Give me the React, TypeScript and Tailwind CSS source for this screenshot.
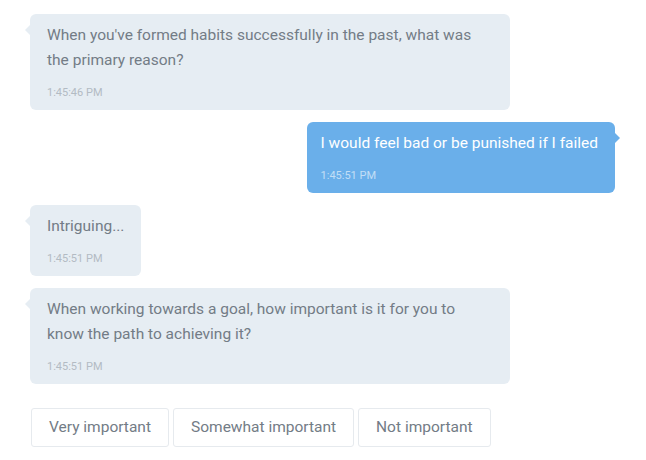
import React from 'react';

type Msg = { from: 'bot' | 'me'; text: string; time: string };

const messages: Msg[] = [
  { from: 'bot', text: "When you've formed habits successfully in the past, what was the primary reason?", time: '1:45:46 PM' },
  { from: 'me', text: 'I would feel bad or be punished if I failed', time: '1:45:51 PM' },
  { from: 'bot', text: 'Intriguing...', time: '1:45:51 PM' },
  { from: 'bot', text: 'When working towards a goal, how important is it for you to know the path to achieving it?', time: '1:45:51 PM' },
];

const options = ['Very important', 'Somewhat important', 'Not important'];

function Bubble({ msg }: { msg: Msg }) {
  const mine = msg.from === 'me';
  return (
    <div className={`flex ${mine ? 'justify-end pr-[31px]' : 'justify-start pl-[30px]'}`}>
      <div
        className={`relative max-w-[480px] rounded-[6px] pt-[9px] pb-[10px] ${
          mine ? 'bg-[#6aafea] text-white pl-[14px] pr-[17px]' : 'bg-[#e6edf3] text-[#737c86] px-[17px]'
        }`}
      >
        {/* tail */}
        <span
          className={`absolute top-[11px] h-0 w-0 border-y-[5px] border-y-transparent ${
            mine ? 'right-[-5px] border-l-[5px] border-l-[#6aafea]' : 'left-[-5px] border-r-[5px] border-r-[#e6edf3]'
          }`}
        />
        <p className="text-[15.5px] leading-[25px]">{msg.text}</p>
        <p className={`mt-[13px] text-[11px] leading-[14px] ${mine ? 'text-white/60' : 'text-[#b3bbc3]'}`}>{msg.time}</p>
      </div>
    </div>
  );
}

export default function App() {
  return (
    <div className="w-[646px] h-[460px] bg-white overflow-hidden" style={{ fontFamily: 'Roboto, "Noto Sans", sans-serif' }}>
      <div className="flex flex-col gap-[12px] pt-[14px]">
        {messages.map((m, i) => (
          <Bubble key={i} msg={m} />
        ))}
      </div>
      <div className="mt-[24px] flex gap-[4px] pl-[31px]">
        {options.map((o) => (
          <button
            key={o}
            className="h-[39px] rounded-[3px] border border-[#e6eaee] bg-white px-[17px] text-[15.5px] text-[#737c86]"
          >
            {o}
          </button>
        ))}
      </div>
    </div>
  );
}
